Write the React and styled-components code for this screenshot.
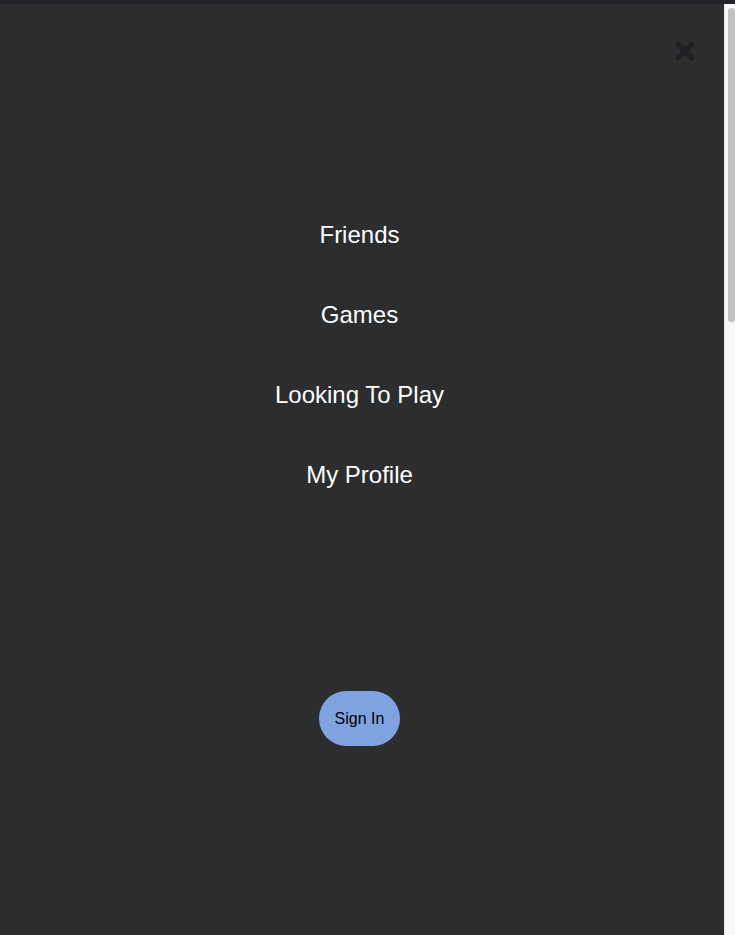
import React from 'react';
import styled, { createGlobalStyle } from 'styled-components';

const GlobalStyle = createGlobalStyle`
    html, body {
        margin: 0;
        padding: 0;
        background: #2c2d2f;
    }
    body {
        font-family: "Liberation Sans", Arial, Helvetica, sans-serif;
        overflow: hidden;
    }
`;

const links = ['Friends', 'Games', 'Looking To Play', 'My Profile'];

const App = () => {
    return (
        <>
            <GlobalStyle />
            <Page>
                <TopBar />
                <Body>
                    <Menu>
                        <Header>
                            <CloseButton aria-label="Close menu">
                                <svg width="22" height="22" viewBox="0 0 22 22">
                                    <path
                                        d="M4 4 L18 18 M18 4 L4 18"
                                        stroke="#1f2022"
                                        strokeWidth="5"
                                        strokeLinecap="round"
                                        fill="none"
                                    />
                                </svg>
                            </CloseButton>
                        </Header>
                        <Nav>
                            {links.map((label) => (
                                <NavItem key={label} href="#">{label}</NavItem>
                            ))}
                        </Nav>
                        <SignIn>Sign In</SignIn>
                    </Menu>
                    <ScrollTrack>
                        <ScrollThumb />
                    </ScrollTrack>
                </Body>
            </Page>
        </>
    );
}

export default App;

const Page = styled.div`
    display: flex;
    flex-direction: column;
    width: 735px;
    height: 935px;
    overflow: hidden;
`;

const TopBar = styled.div`
    height: 4px;
    background: #232427;
    flex-shrink: 0;
`;

const Body = styled.div`
    display: flex;
    flex-direction: row;
    flex: 1;
`;

const Menu = styled.div`
    width: 724px;
    display: flex;
    flex-direction: column;
    align-items: center;
    padding-right: 5px;
    box-sizing: border-box;
    background: linear-gradient(15deg, #2a2b2d 0%, #2c2d2f 6%, #2c2d2f 100%);
`;

const Header = styled.div`
    align-self: stretch;
    display: flex;
    justify-content: flex-end;
    padding: 36px 23px 0 0;
`;

const CloseButton = styled.button`
    width: 22px;
    height: 22px;
    padding: 0;
    border: none;
    background: none;
    display: flex;
    cursor: pointer;
`;

const Nav = styled.nav`
    display: flex;
    flex-direction: column;
    align-items: center;
    margin-top: 133px;
`;

const NavItem = styled.a`
    height: 80px;
    display: flex;
    align-items: center;
    color: #ffffff;
    font-size: 24px;
    text-decoration: none;
`;

const SignIn = styled.button`
    margin-top: 176px;
    height: 55px;
    padding: 0 16px;
    border: none;
    border-radius: 28px;
    background: #7fa3e1;
    color: #000000;
    font-family: "Liberation Sans", Arial, sans-serif;
    font-size: 16px;
    cursor: pointer;
`;

const ScrollTrack = styled.div`
    width: 11px;
    background: #f7f7f7;
    border-left: 1px solid #e8e8e8;
    box-sizing: border-box;
    display: flex;
    justify-content: center;
    padding-top: 4px;
`;

const ScrollThumb = styled.div`
    width: 7px;
    height: 314px;
    margin-left: 2px;
    border-radius: 4px;
    background: #c1c1c1;
`;
